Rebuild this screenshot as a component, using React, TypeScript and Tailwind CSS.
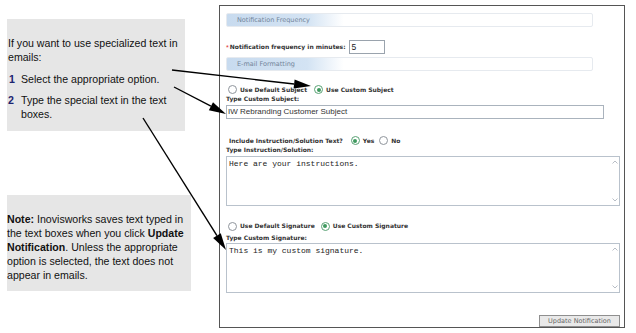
import React from "react";

const label = "font-['DejaVu_Sans',sans-serif] font-bold text-[6px] text-[#333] leading-none";

const Radio = ({ on }: { on?: boolean }) => (
  <span
    className={`inline-flex items-center justify-center w-[9px] h-[9px] rounded-full border ${
      on ? "border-[#5aa275]" : "border-[#8f959c]"
    } bg-white`}
  >
    {on && <span className="w-[4px] h-[4px] rounded-full bg-[#3f9a5f]" />}
  </span>
);

const SectionBar = ({ title }: { title: string }) => (
  <div className="h-[14px] w-[367px] rounded-[2px] border border-[#e6eaef] bg-gradient-to-r from-[#c8dbef] via-[#d3e3f3] via-22% to-white to-32% flex items-center pl-[10px]">
    <span className="font-['DejaVu_Sans',sans-serif] text-[6.5px] text-[#72849a] leading-none">{title}</span>
  </div>
);

const TextArea = ({ text }: { text: string }) => (
  <div className="h-[50px] w-[394px] border border-[#b9c2cc] bg-white flex">
    <div className="flex-1 pl-[2px] pt-[3px] font-['Liberation_Mono',monospace] text-[8px] leading-none text-[#222]">
      {text}
    </div>
    <div className="w-[9px] flex flex-col justify-between items-center py-[3px] text-[#b8bec6]">
      <svg width="6" height="4" viewBox="0 0 6 4">
        <path d="M0.5 3.5 L3 1 L5.5 3.5" fill="none" stroke="currentColor" strokeWidth="1" />
      </svg>
      <svg width="6" height="4" viewBox="0 0 6 4">
        <path d="M0.5 0.5 L3 3 L5.5 0.5" fill="none" stroke="currentColor" strokeWidth="1" />
      </svg>
    </div>
  </div>
);

const arrows = [
  { x1: 172, y1: 70, x2: 311, y2: 86 },
  { x1: 174, y1: 87, x2: 226, y2: 114 },
  { x1: 143, y1: 118, x2: 226, y2: 250 },
];

const Arrows = () => (
  <svg className="absolute inset-0 pointer-events-none" width="636" height="333">
    {arrows.map((a, i) => {
      const dx = a.x2 - a.x1;
      const dy = a.y2 - a.y1;
      const len = Math.hypot(dx, dy);
      const ux = dx / len;
      const uy = dy / len;
      const hl = 17;
      const hw = 4.5;
      const bx = a.x2 - ux * hl;
      const by = a.y2 - uy * hl;
      const pts = `${a.x2},${a.y2} ${bx - uy * hw},${by + ux * hw} ${bx + uy * hw},${by - ux * hw}`;
      return (
        <g key={i}>
          <line x1={a.x1} y1={a.y1} x2={bx} y2={by} stroke="#000" strokeWidth="1.4" />
          <polygon points={pts} fill="#000" />
        </g>
      );
    })}
  </svg>
);

export default function App() {
  return (
    <div className="relative w-[636px] h-[333px] bg-white flex overflow-hidden font-['Liberation_Sans',Arial,sans-serif]">
      {/* left notes */}
      <div className="w-[219px] pl-[7px] flex flex-col">
        <div className="mt-[19px] w-[178px] h-[112px] bg-[#e6e6e6] pl-[1px] pt-[17px] text-[10.6px] leading-[14px] text-[#111]">
          <p>If you want to use specialized text in emails:</p>
          <div className="mt-[8px] flex">
            <span className="w-[13px] pl-[1px] font-bold text-[#1c2470]">1</span>
            <span>Select the appropriate option.</span>
          </div>
          <div className="mt-[7px] flex">
            <span className="w-[13px] font-bold text-[#1c2470]">2</span>
            <span>
              Type the special text in the text
              <br />
              boxes.
            </span>
          </div>
        </div>
        <div className="mt-[64px] w-[184px] h-[96px] bg-[#e6e6e6] pt-[17px] text-[10.6px] leading-[14px] text-[#111]">
          <p>
            <b>Note:</b> Inovisworks saves text typed in the text boxes when you click <b>Update Notification</b>.
            Unless the appropriate option is selected, the text does not appear in emails.
          </p>
        </div>
      </div>

      {/* screen capture panel */}
      <div className="mt-[5px] w-[406px] h-[323px] border border-[#555] bg-white pl-[6px] flex flex-col">
        <div className="mt-[7px]">
          <SectionBar title="Notification Frequency" />
        </div>
        <div className="mt-[13px] h-[14px] flex items-center">
          <span className="text-[#d33] text-[7px] leading-none mr-[1px]">*</span>
          <span className={label}>Notification frequency in minutes:</span>
          <div className="ml-[3px] w-[36px] h-[14px] border border-[#9aa3ad] flex items-center pl-[2px] text-[8.5px] text-[#222]">
            5
          </div>
        </div>
        <div className="mt-[3px]">
          <SectionBar title="E-mail Formatting" />
        </div>
        <div className="mt-[14px] h-[10px] flex items-center pl-[2px] gap-[2px]">
          <Radio />
          <span className={`${label} ml-[1px] mr-[5px]`}>Use Default Subject</span>
          <Radio on />
          <span className={`${label} ml-[1px]`}>Use Custom Subject</span>
        </div>
        <div className="h-[8px] flex items-center">
          <span className={label}>Type Custom Subject:</span>
        </div>
        <div className="mt-[2px] w-[378px] h-[14px] border border-[#aab3bd] flex items-center pl-[1px] text-[8px] text-[#333]">
          IW Rebranding Customer Subject
        </div>
        <div className="mt-[17px] h-[10px] flex items-center pl-[3px]">
          <span className={label}>Include Instruction/Solution Text?</span>
          <span className="ml-[8px] flex"><Radio on /></span>
          <span className={`${label} ml-[3px]`}>Yes</span>
          <span className="ml-[5px] flex"><Radio /></span>
          <span className={`${label} ml-[3px]`}>No</span>
        </div>
        <div className="h-[10px] flex items-center">
          <span className={label}>Type Instruction/Solution:</span>
        </div>
        <div className="mt-[1px]">
          <TextArea text="Here are your instructions." />
        </div>
        <div className="mt-[15px] h-[10px] flex items-center pl-[2px] gap-[2px]">
          <Radio />
          <span className={`${label} ml-[1px] mr-[4px]`}>Use Default Signature</span>
          <Radio on />
          <span className={`${label} ml-[1px]`}>Use Custom Signature</span>
        </div>
        <div className="mt-[2px] h-[9px] flex items-center">
          <span className={label}>Type Custom Signature:</span>
        </div>
        <div className="mt-[1px]">
          <TextArea text="This is my custom signature." />
        </div>
        <div className="mt-[22px] w-[394px] flex justify-end">
          <div className="w-[81px] h-[12px] border border-[#8f8f8f] bg-[#e9e9e9] flex items-center justify-center font-['DejaVu_Sans',sans-serif] text-[6.5px] text-[#666] leading-none">
            Update Notification
          </div>
        </div>
      </div>

      <Arrows />
    </div>
  );
}
